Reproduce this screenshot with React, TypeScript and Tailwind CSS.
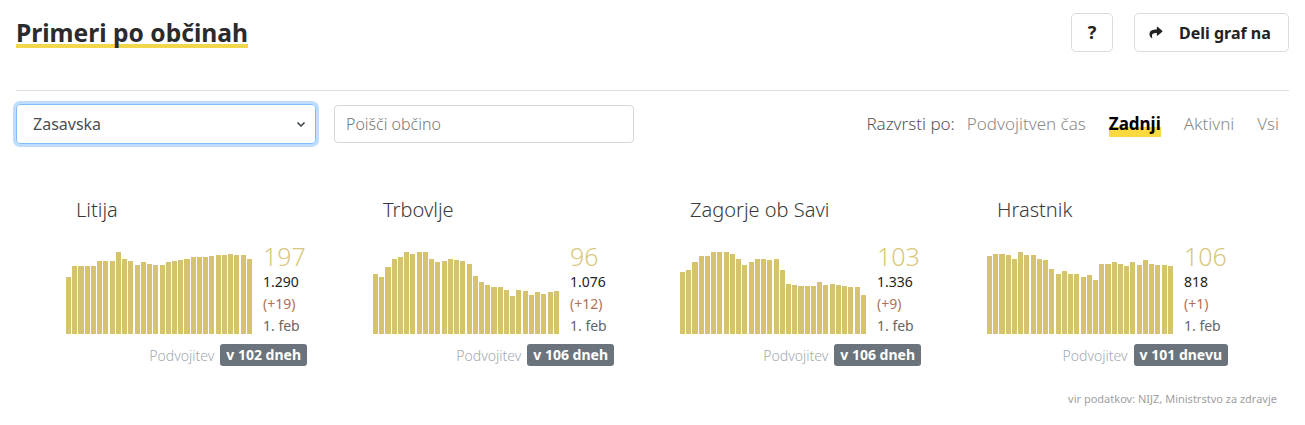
import { FaShare } from 'react-icons/fa';

const FONT = "font-['Noto_Sans','Open_Sans',sans-serif]";

type Town = {
  name: string;
  value: string;
  total: string;
  delta: string;
  date: string;
  doubling: string;
  bars: number[];
};

const TOWNS: Town[] = [
  {
    name: 'Litija',
    value: '197',
    total: '1.290',
    delta: '(+19)',
    date: '1. feb',
    doubling: 'v 102 dneh',
    bars: [57, 68, 68, 68, 68, 73, 73, 73, 82, 75, 73, 69, 72, 70, 69, 69, 72, 73, 74, 75, 77, 77, 77, 78, 79, 79, 80, 79, 79, 75],
  },
  {
    name: 'Trbovlje',
    value: '96',
    total: '1.076',
    delta: '(+12)',
    date: '1. feb',
    doubling: 'v 106 dneh',
    bars: [60, 57, 67, 75, 77, 82, 80, 82, 82, 75, 72, 73, 75, 74, 73, 70, 58, 52, 49, 47, 47, 44, 38, 44, 43, 39, 42, 40, 42, 43],
  },
  {
    name: 'Zagorje ob Savi',
    value: '103',
    total: '1.336',
    delta: '(+9)',
    date: '1. feb',
    doubling: 'v 106 dneh',
    bars: [62, 64, 72, 78, 78, 82, 82, 82, 80, 75, 69, 72, 75, 75, 74, 75, 64, 50, 49, 48, 48, 48, 52, 49, 50, 49, 48, 47, 47, 39],
  },
  {
    name: 'Hrastnik',
    value: '106',
    total: '818',
    delta: '(+1)',
    date: '1. feb',
    doubling: 'v 101 dnevu',
    bars: [78, 80, 80, 79, 75, 82, 79, 79, 75, 74, 65, 60, 63, 60, 60, 57, 59, 54, 70, 70, 72, 70, 68, 72, 69, 74, 70, 69, 69, 68],
  },
];

function TownCard({ town }: { town: Town }) {
  return (
    <div className="w-[241px] shrink-0">
      <h3 className="pl-[10px] text-[20px] font-light leading-[28px] text-[#3a3a3a]">{town.name}</h3>
      <div className="mt-[17px] flex items-end gap-[11px]">
        <div className="mb-[3px] flex h-[85px] w-[186px] items-end gap-[1.2px]">
          {town.bars.map((h, i) => (
            <div key={i} className="flex-1 bg-[#d5c46d]" style={{ height: h }} />
          ))}
        </div>
        <div className="flex flex-col">
          <span className="text-[25px] font-light leading-[30px] text-[#d8c87d]">{town.value}</span>
          <span className="text-[14px] leading-[22px] text-[#222]">{town.total}</span>
          <span className="text-[14px] leading-[22px] text-[#b0705a]">{town.delta}</span>
          <span className="text-[14px] leading-[22px] text-[#666]">{town.date}</span>
        </div>
      </div>
      <div className="mt-[7px] flex items-center justify-end gap-[6px]">
        <span className="text-[14px] font-light text-[#a3aab2]">Podvojitev</span>
        <span className="rounded-[3px] bg-[#6b747c] px-[6px] text-[14px] font-bold leading-[22px] text-white">
          {town.doubling}
        </span>
      </div>
    </div>
  );
}

export default function App() {
  return (
    <div className={`${FONT} min-h-[425px] bg-white px-[16px] pt-[13px] text-[#222]`}>
      <header className="flex items-center justify-between">
        <h2 className="relative text-[24.6px] font-bold leading-[30px] text-[#2b2b2b]">
          <span className="bg-[linear-gradient(transparent_84%,#f2d64b_84%,#f2d64b_96%,transparent_96%)]">
            Primeri po občinah
          </span>
        </h2>
        <div className="flex items-center gap-[21px]">
          <button className="flex h-[39px] w-[42px] items-center justify-center rounded-[5px] border border-[#dcdcdc] text-[18px] font-bold text-[#222]">
            ?
          </button>
          <button className="flex h-[39px] w-[155px] items-center gap-[16px] rounded-[5px] border border-[#dcdcdc] pl-[14px] text-[16px] font-bold text-[#222]">
            <FaShare className="h-[13px] w-[14px]" />
            Deli graf na
          </button>
        </div>
      </header>

      <div className="mt-[38px] border-t border-[#dedede]" />

      <div className="mt-[13px] flex items-center justify-between">
        <div className="flex items-center gap-[18px]">
          <div className="flex h-[40px] w-[300px] items-center justify-between rounded-[4px] border border-[#80bdff] pl-[16px] pr-[8px] text-[16px] text-[#495057] shadow-[0_0_0_3px_rgba(0,123,255,0.25)]">
            <span>Zasavska</span>
            <svg width="12" height="12" viewBox="0 0 12 12" fill="none" stroke="#343a40" strokeWidth="1.5">
              <path d="M2.5 4.5 6 8l3.5-3.5" />
            </svg>
          </div>
          <div className="flex h-[38px] w-[300px] items-center rounded-[4px] border border-[#d6d6d6] pl-[11px] text-[16px] font-light text-[#777]">
            Poišči občino
          </div>
        </div>
        <div className="flex items-center pr-[10px] text-[17px] font-light">
          <span className="text-[#555]">Razvrsti po:</span>
          <span className="ml-[12px] text-[#8a8a8a]">Podvojitven čas</span>
          <span className="ml-[23px] bg-[linear-gradient(transparent_62%,#fcd93e_62%)] font-bold text-black">Zadnji</span>
          <span className="ml-[23px] text-[#8a8a8a]">Aktivni</span>
          <span className="ml-[23px] text-[#8a8a8a]">Vsi</span>
        </div>
      </div>

      <div className="mt-[52px] flex gap-[66px] pl-[50px]">
        {TOWNS.map((t) => (
          <TownCard key={t.name} town={t} />
        ))}
      </div>

      <div className="mt-[25px] pr-[12px] text-right text-[11px] text-[#a0a0a0]">
        vir podatkov: NIJZ, Ministrstvo za zdravje
      </div>
    </div>
  );
}
